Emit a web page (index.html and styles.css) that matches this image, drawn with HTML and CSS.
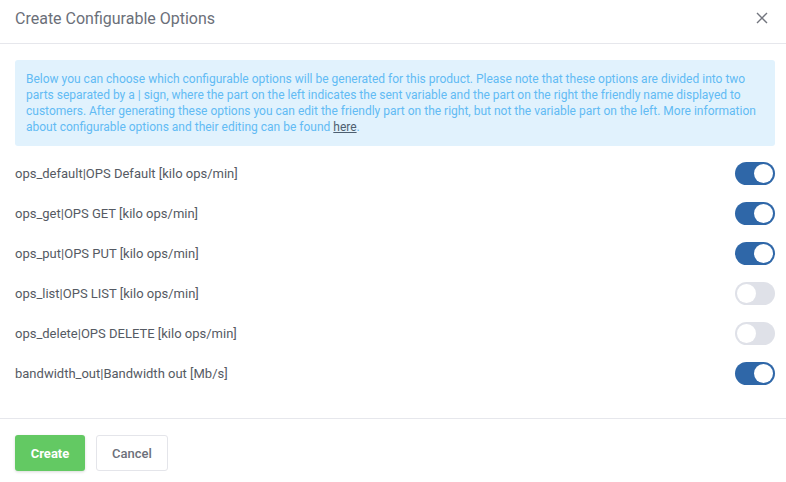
FILE: index.html
```html
<!DOCTYPE html>
<html>
<head>
<meta charset="utf-8">
<link rel="stylesheet" href="styles.css">
</head>
<body>
<div class="modal">
  <div class="modal-header">
    <h2 class="modal-title">Create Configurable Options</h2>
    <button class="close" aria-label="Close">
      <svg width="12" height="12" viewBox="0 0 12 12"><path d="M1 1L11 11M11 1L1 11" stroke="#72757e" stroke-width="1.4" fill="none"/></svg>
    </button>
  </div>
  <div class="modal-body">
    <div class="info">Below you can choose which configurable options will be generated for this product. Please note that these options are divided into two parts separated by a | sign, where the part on the left indicates the sent variable and the part on the right the friendly name displayed to customers. After generating these options you can edit the friendly part on the right, but not the variable part on the left. More information about configurable options and their editing can be found <a href="#">here</a>.</div>
    <div class="options">
      <div class="option"><span>ops_default|OPS Default [kilo ops/min]</span><span class="switch on"><span class="knob"></span></span></div>
      <div class="option"><span>ops_get|OPS GET [kilo ops/min]</span><span class="switch on"><span class="knob"></span></span></div>
      <div class="option"><span>ops_put|OPS PUT [kilo ops/min]</span><span class="switch on"><span class="knob"></span></span></div>
      <div class="option"><span>ops_list|OPS LIST [kilo ops/min]</span><span class="switch"><span class="knob"></span></span></div>
      <div class="option"><span>ops_delete|OPS DELETE [kilo ops/min]</span><span class="switch"><span class="knob"></span></span></div>
      <div class="option"><span>bandwidth_out|Bandwidth out [Mb/s]</span><span class="switch on"><span class="knob"></span></span></div>
    </div>
  </div>
  <div class="modal-footer">
    <button class="btn btn-create">Create</button>
    <button class="btn btn-cancel">Cancel</button>
  </div>
</div>
</body>
</html>
```
FILE: styles.css
```css
* { box-sizing: border-box; }
html, body { margin: 0; padding: 0; background: #fff; }
body { font-family: Roboto, "Liberation Sans", sans-serif; width: 786px; height: 482px; overflow: hidden; }
.modal { display: flex; flex-direction: column; }
.modal-header {
  height: 44px;
  display: flex;
  align-items: center;
  justify-content: space-between;
  padding: 0 15px;
  border-bottom: 1px solid #e6e7ec;
}
.modal-title { margin: 0; font-size: 16px; font-weight: 400; color: #6b6f79; padding-bottom: 7px; }
.close { border: 0; background: none; padding: 0; width: 14px; height: 14px; display: flex; align-items: center; justify-content: center; margin-right: 2px; margin-bottom: 7px; cursor: pointer; }
.modal-body { padding: 16px 11px 0 15px; }
.info {
  background: #e1f2fd;
  color: #62bbf4;
  font-size: 12px;
  line-height: 16px;
  padding: 11px 11px 11px 11px;
  border-radius: 3px;
}
.info a { color: #4d5f70; text-decoration: underline; }
.options { padding-top: 7px; padding-bottom: 25px; }
.option {
  height: 40px;
  display: flex;
  align-items: center;
  justify-content: space-between;
  font-size: 13px;
  color: #555a63;
}
.switch {
  width: 40px;
  height: 23px;
  border-radius: 12px;
  background: #dfe1e8;
  position: relative;
  display: inline-block;
}
.switch .knob {
  position: absolute;
  top: 2px;
  left: 2px;
  width: 19px;
  height: 19px;
  border-radius: 50%;
  background: #fff;
}
.switch.on { background: #2f67a8; }
.switch.on .knob { left: auto; right: 2px; }
.modal-footer {
  border-top: 1px solid #e6e7ec;
  padding: 16px 15px;
  display: flex;
  gap: 11px;
}
.btn {
  height: 36px;
  font-family: inherit;
  font-size: 13px;
  border-radius: 3px;
  cursor: pointer;
}
.btn-create {
  width: 70px;
  background: #63c963;
  color: #fff;
  font-weight: 700;
  border: 0;
  box-shadow: 0 1px 3px rgba(0,0,0,0.15);
}
.btn-cancel {
  width: 72px;
  background: #fff;
  color: #6c707a;
  font-weight: 500;
  border: 1px solid #e4e5ea;
}
```
